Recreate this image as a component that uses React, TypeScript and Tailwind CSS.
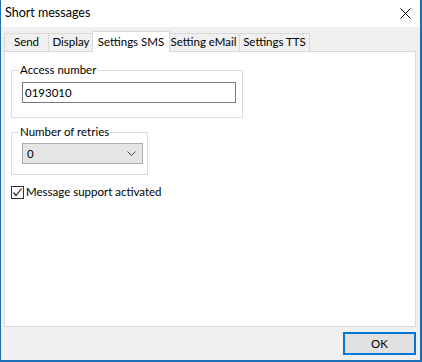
import { useState } from 'react';

type TTab = {
    label: string;
    width: string;
};

const tabs: TTab[] = [
    { label: 'Send', width: 'w-[45px]' },
    { label: 'Display', width: 'w-[46px]' },
    { label: 'Settings SMS', width: 'w-[78px]' },
    { label: 'Setting eMail', width: 'w-[73px]' },
    { label: 'Settings TTS', width: 'w-[71px]' },
];

export default function App() {
    const [active, setActive] = useState(2);
    const [checked, setChecked] = useState(true);

    return (
        <div className="w-[422px] h-[362px] flex flex-col bg-[#f0f0f0] border-l border-r-2 border-b-2 border-[#1c6fb7] font-['Lato','Liberation_Sans',sans-serif] text-[11.5px] text-black leading-[14px] overflow-hidden">
            <header className="h-[27px] shrink-0 bg-white flex items-center justify-between pl-[4px] pr-[9px]">
                <span className="text-[12.5px] pb-[2px]">Short messages</span>
                <CloseIcon />
            </header>

            <div className="px-[3px] pr-[4px]">
                <nav className="h-[24px] flex items-end">
                    {tabs.map((tab, i) =>
                        i === active ? (
                            <button
                                key={tab.label}
                                onClick={() => setActive(i)}
                                className={`${tab.width} h-[21px] -mx-[2px] -mb-px relative z-10 bg-white border border-b-0 border-[#d9d9d9] flex items-start justify-center pt-[3px] shrink-0`}
                            >
                                {tab.label}
                            </button>
                        ) : (
                            <button
                                key={tab.label}
                                onClick={() => setActive(i)}
                                className={`${tab.width} h-[18px] bg-[#f0f0f0] border border-b-0 border-[#d9d9d9] -ml-px first:ml-0 flex items-center justify-center pb-px shrink-0`}
                            >
                                {tab.label}
                            </button>
                        ),
                    )}
                </nav>

                <main className="h-[276px] bg-white border border-[#d9d9d9] pl-[6px] pt-[11px]">
                    <fieldset className="w-[232px] border border-[#dcdcdc] pt-[5px] pb-[14px]">
                        <legend className="ml-[7px] px-px">Access number</legend>
                        <input
                            defaultValue="0193010"
                            className="ml-[10px] w-[214px] h-[21px] border border-[#7a7a7a] px-[2px] outline-none block"
                        />
                    </fieldset>

                    <fieldset className="w-[137px] mt-[7px] border border-[#dcdcdc] pt-[4px] pb-[10px]">
                        <legend className="ml-[7px] px-px">Number of retries</legend>
                        <div className="ml-[10px] w-[121px] h-[21px] bg-[#e5e5e5] border border-[#adadad] flex items-center justify-between pl-[4px] pr-[6px]">
                            <span>0</span>
                            <ChevronIcon />
                        </div>
                    </fieldset>

                    <label className="mt-[10px] flex items-center gap-[2px] cursor-default" onClick={() => setChecked(!checked)}>
                        <span className="w-[13px] h-[13px] border border-[#333] bg-white flex items-center justify-center">
                            {checked && <CheckIcon />}
                        </span>
                        <span>Message support activated</span>
                    </label>
                </main>
            </div>

            <footer className="flex justify-end pt-[5px] pr-[4px]">
                <button className="w-[73px] h-[23px] bg-[#e1e1e1] border-2 border-[#0078d7] flex items-center justify-center">OK</button>
            </footer>
        </div>
    );
}

function CloseIcon() {
    return (
        <svg width="11" height="11" viewBox="0 0 11 11" className="mb-[1px]">
            <path d="M0.5 0.5 L10.5 10.5 M10.5 0.5 L0.5 10.5" stroke="#000" strokeWidth="1" />
        </svg>
    );
}

function ChevronIcon() {
    return (
        <svg width="9" height="5" viewBox="0 0 9 5">
            <path d="M0.5 0.5 L4.5 4.5 L8.5 0.5" stroke="#444" strokeWidth="1" fill="none" />
        </svg>
    );
}

function CheckIcon() {
    return (
        <svg width="11" height="11" viewBox="0 0 11 11">
            <path d="M1.5 5.5 L4 8.5 L9.5 1.5" stroke="#222" strokeWidth="1.2" fill="none" />
        </svg>
    );
}
